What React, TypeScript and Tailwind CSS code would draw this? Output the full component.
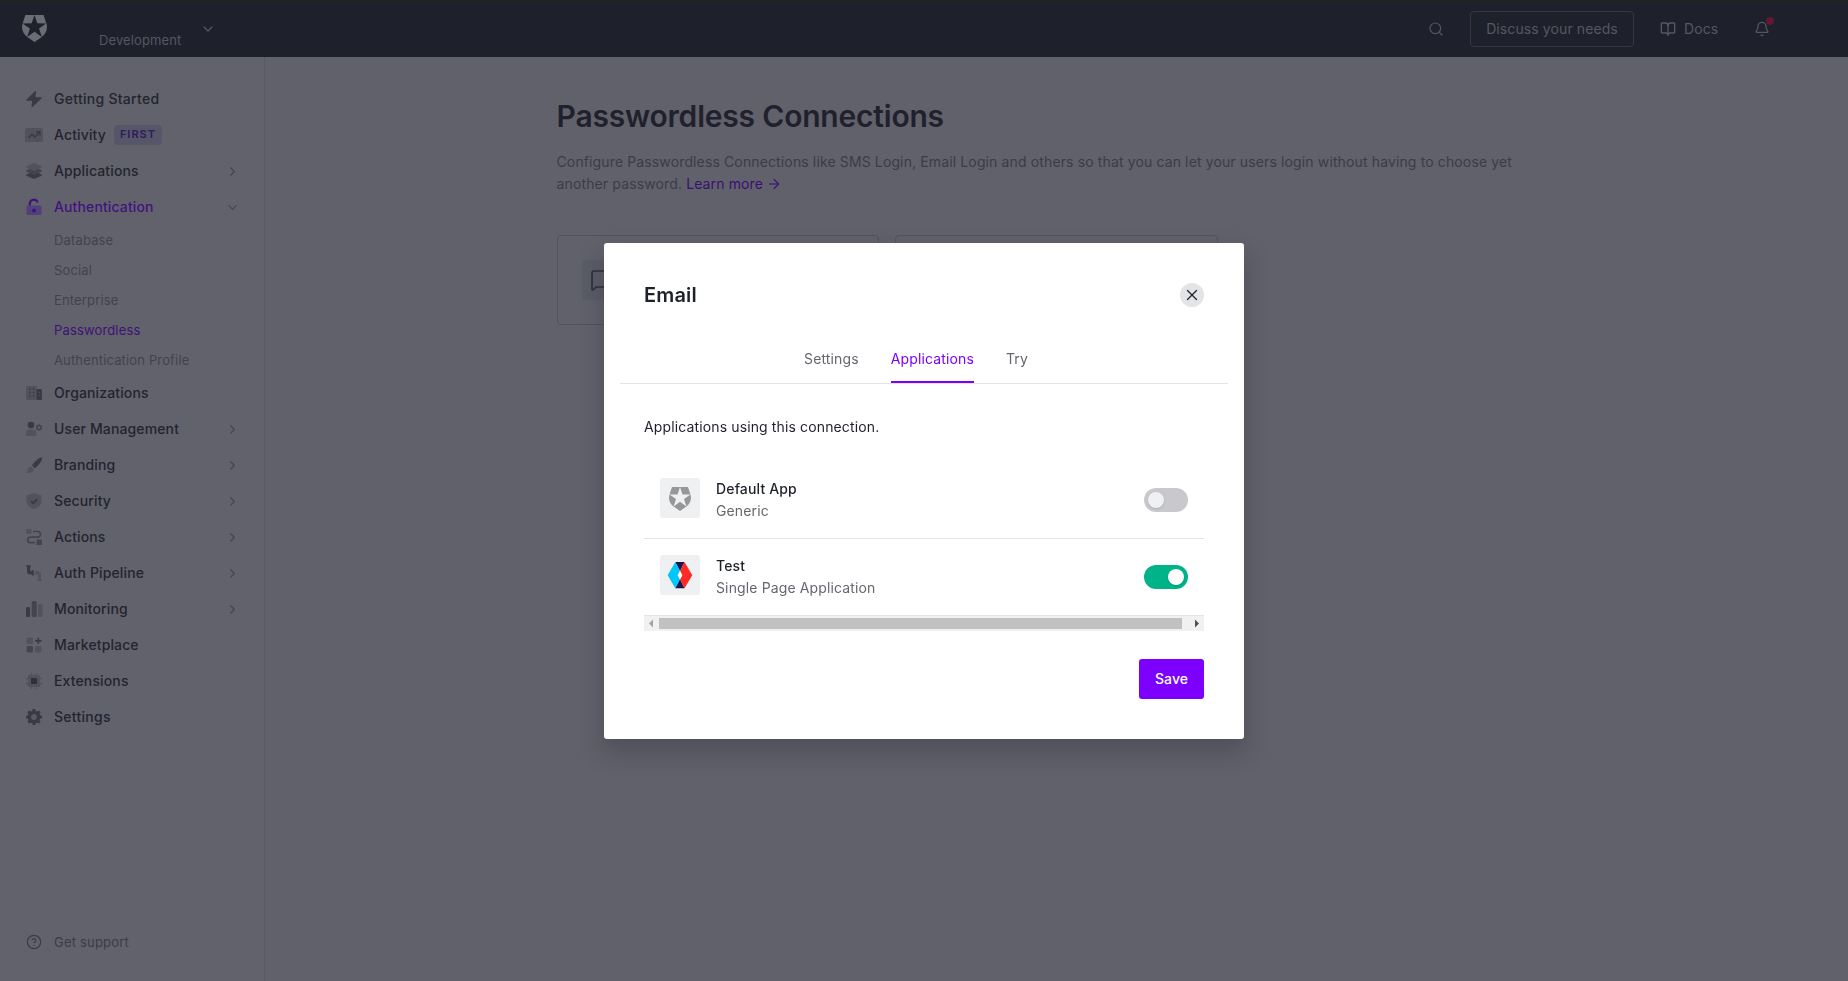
import React from 'react';
import { ArrowRight, Bell, BookOpen, ChevronDown, ChevronRight, CircleHelp, MessageSquare, Search, X } from 'lucide-react';

const D = '#393a46';
const M = '#43444f';
const L = '#51525d';

function Shield({ className, fill }: { className: string; fill: string }) {
  return (
    <svg viewBox="1.5 0 21 24" preserveAspectRatio="none" className={className} fill={fill}>
      <path d="M21.98 7.448L19.62 0H4.347L2.02 7.448c-1.352 4.312.03 9.206 3.815 12.015L12.007 24l6.157-4.552c3.755-2.81 5.182-7.688 3.815-12.015l-6.16 4.58 2.343 7.45-6.157-4.597-6.158 4.58 2.358-7.433-6.188-4.55 7.63-.045L12.008 0l2.356 7.404 7.615.044z" />
    </svg>
  );
}

const icons: Record<string, React.ReactNode> = {
  bolt: <path d="M8.900.2.5 8.400c-.5.600-.2 1.300.5 1.300h5.200l-.7 5.600c-.1.700.700 1 1.200.5l8.900-8.200c.5-.5.2-1.300-.5-1.300H9.500l.5-5.500C10.100.100 9.400-.300 8.900.200z" fill={D} />,
  activity: (
    <>
      <rect x="-1" y="1" width="18" height="14" rx="1.5" fill={L} />
      <path d="M2.500 10.800 6 7.200l3 2.800 4.500-4.700M10 4.800h4v4" fill="none" stroke={D} strokeWidth="1.400" />
    </>
  ),
  layers: (
    <>
      <path d="M.3 11.500 8 8l7.700 3.500v1.200L8 16 .3 12.700z" fill={D} />
      <path d="M.3 7.300 8 4l7.700 3.300v1.200L8 12 .3 8.500z" fill={M} />
      <path d="M.3 3.400 8 0l7.700 3.400v1.200L8 8 .3 4.600z" fill={L} />
    </>
  ),
  lock: (
    <>
      <rect x=".5" y="6.500" width="15" height="9.500" rx="1.500" fill="#50417c" />
      <path d="M3.800 6.500V4.500a4 4 0 0 1 7.800-1" fill="none" stroke="#42127f" strokeWidth="2.200" />
      <circle cx="8" cy="11.500" r="2" fill="#42127f" />
    </>
  ),
  building: (
    <>
      <rect x="0" y="1" width="11" height="14" rx="1.500" fill={L} />
      <rect x="10.500" y="4" width="5.500" height="11" rx="1.200" fill={D} />
      <path d="M3 4h1.400M6.800 4h1.400M3 7.500h1.400M6.800 7.500h1.400M3 11h1.400M6.800 11h1.400" stroke={D} strokeWidth="1.400" />
      <path d="M13 7.500h1M13 10.500h1" stroke={L} strokeWidth="1" />
    </>
  ),
  users: (
    <>
      <circle cx="5" cy="4" r="3.300" fill={D} />
      <path d="M0 15v-3a3.500 3.500 0 0 1 3.500-3.500H7A3.500 3.500 0 0 1 10.500 12v1.500A1.500 1.500 0 0 1 9 15z" fill={L} />
      <circle cx="13" cy="6.500" r="2" fill="none" stroke={M} strokeWidth="1.400" />
      <path d="M13 3.300v1.200M13 8.500v1.200M10.200 4.900l1 .6M14.800 7.500l1 .6M10.200 8.100l1-.6M14.800 5.500l1-.6" stroke={M} strokeWidth="1.300" />
    </>
  ),
  brush: (
    <>
      <path d="M15.700.300C12.500 1 8.500 4.500 6 8.600L8.700 11.200C12.300 8.500 15.800 4.500 16.300 1c0-.5-.2-.7-.6-.7z" fill={D} />
      <path d="M5.300 9.700c-3 0-3.500 2.300-3.700 3.700-.1.900-.7 1.700-1.600 2.300 3.300.6 8.200-.2 7.700-3.700z" fill={L} />
    </>
  ),
  shield: (
    <>
      <path d="M8 0 15.500 2.500V8c0 4-3.500 6.700-7.500 8C4 14.700.5 12 .5 8V2.500z" fill={L} />
      <path d="m5 8 2.200 2.200L11.300 6" fill="none" stroke={D} strokeWidth="1.800" />
    </>
  ),
  actions: (
    <>
      <rect x="0" y="0" width="5.500" height="5" rx=".6" fill={L} />
      <rect x="10.500" y="10.500" width="5.500" height="5.500" rx=".6" fill={M} />
      <path d="M7 2.500h4.700a2.800 2.800 0 0 1 0 5.600H4.500a2.800 2.800 0 0 0 0 5.600H9" fill="none" stroke={M} strokeWidth="1.700" />
    </>
  ),
  pipeline: (
    <>
      <path d="M0 .2h4.800v1.500h-.6v3.500c0 .5.3.8.8.8h1v-.8h1.800v5.200H6v-.8H4.500A3.500 3.500 0 0 1 1 6V1.700H0z" fill={D} />
      <path d="M8.800 6H11a4 4 0 0 1 4 4v4.500h1V16h-4.800v-1.500h.8V11c0-.8-.4-1.200-1.200-1.200h-2z" fill={L} />
    </>
  ),
  bars: (
    <>
      <rect x="0" y="6" width="4" height="10" rx="1.500" fill={D} />
      <rect x="5.700" y="0" width="5" height="16" rx="1.500" fill={M} />
      <rect x="12" y="3" width="4.500" height="13" rx="1.500" fill={L} />
    </>
  ),
  market: (
    <>
      <rect x=".5" y=".5" width="6.500" height="6.500" rx="1.500" fill={L} />
      <rect x=".5" y="9" width="6.500" height="6.500" rx="1.500" fill={M} />
      <rect x="9" y="9" width="6.500" height="6.500" rx="1.500" fill={L} />
      <path d="M12.300.7v6.400M9.100 3.900h6.400" stroke={D} strokeWidth="1.600" />
    </>
  ),
  chip: (
    <>
      <rect x="2" y="2" width="12" height="12" rx="1" fill={L} />
      <path d="M5.500 0v2M10.500 0v2M5.500 14v2M10.500 14v2M0 5.500h2M0 10.500h2M14 5.500h2M14 10.500h2" stroke={L} strokeWidth="1.300" />
      <rect x="5" y="5" width="6" height="6" fill="#2f303b" />
    </>
  ),
  gear: (
    <>
      <circle cx="8" cy="8" r="4.500" fill="none" stroke={D} strokeWidth="3.600" />
      <path d="M8 0v2.500M8 13.500V16M0 8h2.500M13.500 8H16M2.400 2.400l1.700 1.700M11.900 11.900l1.700 1.700M2.400 13.600l1.700-1.700M11.900 4.100l1.700-1.700" stroke={D} strokeWidth="3" />
      <circle cx="8" cy="8" r="2.600" fill="#595a64" />
    </>
  ),
};

type Item = { label: string; icon: string; wide?: boolean; chevron?: 'right' | 'down'; badge?: string; children?: string[] };

const items: Item[] = [
  { label: 'Getting Started', icon: 'bolt', wide: true },
  { label: 'Activity', icon: 'activity', badge: 'FIRST' },
  { label: 'Applications', icon: 'layers', chevron: 'right' },
  {
    label: 'Authentication',
    icon: 'lock',
    chevron: 'down',
    children: ['Database', 'Social', 'Enterprise', 'Passwordless', 'Authentication Profile'],
  },
  { label: 'Organizations', icon: 'building' },
  { label: 'User Management', icon: 'users', chevron: 'right' },
  { label: 'Branding', icon: 'brush', chevron: 'right' },
  { label: 'Security', icon: 'shield', chevron: 'right' },
  { label: 'Actions', icon: 'actions', chevron: 'right' },
  { label: 'Auth Pipeline', icon: 'pipeline', chevron: 'right' },
  { label: 'Monitoring', icon: 'bars', chevron: 'right' },
  { label: 'Marketplace', icon: 'market' },
  { label: 'Extensions', icon: 'chip' },
  { label: 'Settings', icon: 'gear', wide: true },
];

function Header() {
  return (
    <header className="flex h-[57px] shrink-0 items-center border-t-2 border-[#222225] bg-[#1e202b] pb-[2px] text-[#565761]">
      <Shield className="ml-[22px] h-[27px] w-[25px]" fill="#6b6c75" />
      <div className="ml-[52px] w-[83px] pt-[23px] text-[13px] leading-5 tracking-[0.12px]">Development</div>
      <ChevronDown className="ml-[18px] size-4" strokeWidth={1.800} />
      <div className="ml-auto flex items-center">
        <Search className="size-4" strokeWidth={1.800} />
        <button className="ml-[26px] h-9 w-[164px] rounded border border-[#343641] text-sm tracking-[0.1px]">Discuss your needs</button>
        <BookOpen className="ml-[26px] size-4" strokeWidth={2} />
        <span className="ml-2 w-[35px] text-sm tracking-[0.12px]">Docs</span>
        <div className="relative mr-[78px] ml-[35px]">
          <Bell className="size-4" strokeWidth={1.800} />
          <span className="absolute -top-1 -right-1 size-2 rounded-full bg-[#621832]" />
        </div>
      </div>
    </header>
  );
}

function Sidebar() {
  return (
    <aside className="flex w-[265px] shrink-0 flex-col border-r border-[#595a64] bg-[#62626c] pt-6">
      <nav>
        {items.map((item) => (
          <div key={item.label}>
            <div
              className={`flex h-9 items-center pr-6 pl-[26px] text-sm font-medium ${item.wide ? 'tracking-[0.28px]' : 'tracking-[0.13px]'} ${item.children ? 'text-[#42127f]' : 'text-[#23242f]'}`}
            >
              <svg viewBox="0 0 16 16" className="size-4 overflow-visible">{icons[item.icon]}</svg>
              <span className="ml-3">{item.label}</span>
              {item.badge && (
                <span className="ml-2 flex h-5 items-center rounded bg-[#575669] px-1.5 text-[11px] font-semibold tracking-[1px] text-[#2f1a5c]">{item.badge}</span>
              )}
              {item.chevron === 'right' && <ChevronRight className="ml-auto size-[15px] text-[#444550]" strokeWidth={1.800} />}
              {item.chevron === 'down' && <ChevronDown className="ml-auto size-[15px] text-[#444550]" strokeWidth={1.800} />}
            </div>
            {item.children?.map((child) => (
              <div
                key={child}
                className={`flex h-[30px] items-center pt-[2px] pl-[54px] text-[13px] tracking-[0.15px] ${child === 'Passwordless' ? 'text-[#3f1275]' : 'text-[#41424d]'}`}
              >
                {child}
              </div>
            ))}
          </div>
        ))}
      </nav>
      <div className="mt-auto mb-[29px] flex items-center pl-[26px] text-[13px] leading-5 tracking-[0.2px] text-[#3b3c47]">
        <CircleHelp className="size-4" strokeWidth={1.800} />
        <span className="ml-3">Get support</span>
      </div>
    </aside>
  );
}

function Page() {
  return (
    <main className="flex-1 bg-[#61616b]">
      <div className="mx-auto w-[1000px]">
        <h1 className="pt-[39px] text-[30px] leading-10 font-semibold tracking-[-0.2px] text-[#20212c]">Passwordless Connections</h1>
        <p className="mt-[15px] w-[976px] text-sm leading-[22px] tracking-[0.13px] text-[#3b3c47]">
          Configure Passwordless Connections like SMS Login, Email Login and others so that you can let your users login without having to choose yet another password.{' '}
          <a className="text-[#3a0f75]">
            Learn more <ArrowRight className="-ml-px inline size-4 align-[-3px]" strokeWidth={1.600} />
          </a>
        </p>
        <div className="mt-[40px] grid grid-cols-3 gap-4">
          <div className="h-[90px] rounded border border-[#52535d] pt-6 pl-6">
            <div className="flex size-10 items-center justify-center rounded bg-[#5a5c66] text-[#2d2e39]">
              <MessageSquare className="size-6" strokeWidth={1.600} />
            </div>
          </div>
          <div className="h-[90px] rounded border border-[#52535d]" />
        </div>
      </div>
    </main>
  );
}

function AppLogo() {
  return (
    <svg viewBox="0 0 40 40" className="size-10">
      <path d="M15.300 7h9.200L20 16zM15.300 33.300h9.200L20 24z" fill="#1b1650" />
      <path d="M7.700 20.200 15.300 7 20 16l-2.300 4.200L20 24.300l-4.700 9z" fill="#00c7f7" />
      <path d="M32.300 20.200 24.500 7 20 16l2.300 4.200L20 24.300l4.500 9z" fill="#ff2a25" />
      <path d="m20 16 2.300 4.200L20 24.300l-2.300-4.100z" fill="#fff" />
    </svg>
  );
}

function AppRow({ name, kind, on, logo }: { name: string; kind: string; on: boolean; logo: React.ReactNode }) {
  return (
    <div className="flex h-[77px] border-b border-[#e3e4e6] px-4 pt-4">
      <div className="flex size-10 items-center justify-center rounded-[3px] bg-[#eff0f2]">{logo}</div>
      <div className="ml-4 text-sm leading-[22px]">
        <div className="font-medium tracking-[0.15px] text-[#1e212a]">{name}</div>
        <div className="tracking-[0.13px] text-[#65676e]">{kind}</div>
      </div>
      <div className={`mt-[10px] ml-auto flex h-6 w-11 items-center rounded-full px-1 ${on ? 'justify-end bg-[#00b388]' : 'bg-[#c9c8cd]'}`}>
        <span className={`size-4 rounded-full shadow ${on ? 'bg-white' : 'bg-[#eff0f2]'}`} />
      </div>
    </div>
  );
}

function Modal() {
  return (
    <div className="fixed inset-0 flex items-start justify-center pt-[243px]">
      <div role="dialog" className="h-[496px] w-[640px] rounded-[3px] bg-white px-10 pt-10 shadow-[0_12px_24px_rgba(30,33,42,0.3)]">
        <div className="flex h-6 items-center justify-between">
          <h2 className="text-xl font-semibold tracking-[0.15px] text-[#1e212a]">Email</h2>
          <button className="flex size-6 items-center justify-center rounded-full bg-[#e3e4e6] text-[#1e212a]">
            <X className="size-[18px]" strokeWidth={1.700} />
          </button>
        </div>
        <div className="-mx-6 mt-[30px] flex h-[47px] justify-center gap-8 border-b border-[#e3e4e6] pr-4 text-sm leading-[22px] tracking-[0.13px] text-[#65676e]">
          <span className="pt-[11px]">Settings</span>
          <span className="border-b-2 border-[#7d00ff] pt-[11px] text-[#7d00ff]">Applications</span>
          <span className="pt-[11px]">Try</span>
        </div>
        <p className="mt-8 text-sm leading-[22px] tracking-[0.13px] text-[#1e212a]">Applications using this connection.</p>
        <div className="mt-6">
          <AppRow name="Default App" kind="Generic" on={false} logo={<Shield className="mt-[2px] h-6 w-[22px]" fill="#969798" />} />
          <AppRow name="Test" kind="Single Page Application" on logo={<AppLogo />} />
          <div className="flex h-[15px] items-center bg-[#f1f1f1]">
            <svg viewBox="0 0 15 15" className="size-[15px]"><path d="M9 3.500v8l-4-4z" fill="#a3a3a3" /></svg>
            <div className="h-[11px] w-[523px] bg-[#c1c1c1]" />
            <svg viewBox="0 0 15 15" className="ml-auto size-[15px]"><path d="M6 3.500v8l4-4z" fill="#505050" /></svg>
          </div>
        </div>
        <div className="mt-7 flex justify-end">
          <button className="h-10 w-[65px] rounded-[3px] bg-[#7d00ff] text-sm font-medium tracking-[0.1px] text-white">Save</button>
        </div>
      </div>
    </div>
  );
}

export default function App() {
  return (
    <div className="flex h-screen flex-col overflow-hidden font-['Inter',sans-serif]">
      <Header />
      <div className="flex min-h-0 flex-1">
        <Sidebar />
        <Page />
      </div>
      <Modal />
    </div>
  );
}
